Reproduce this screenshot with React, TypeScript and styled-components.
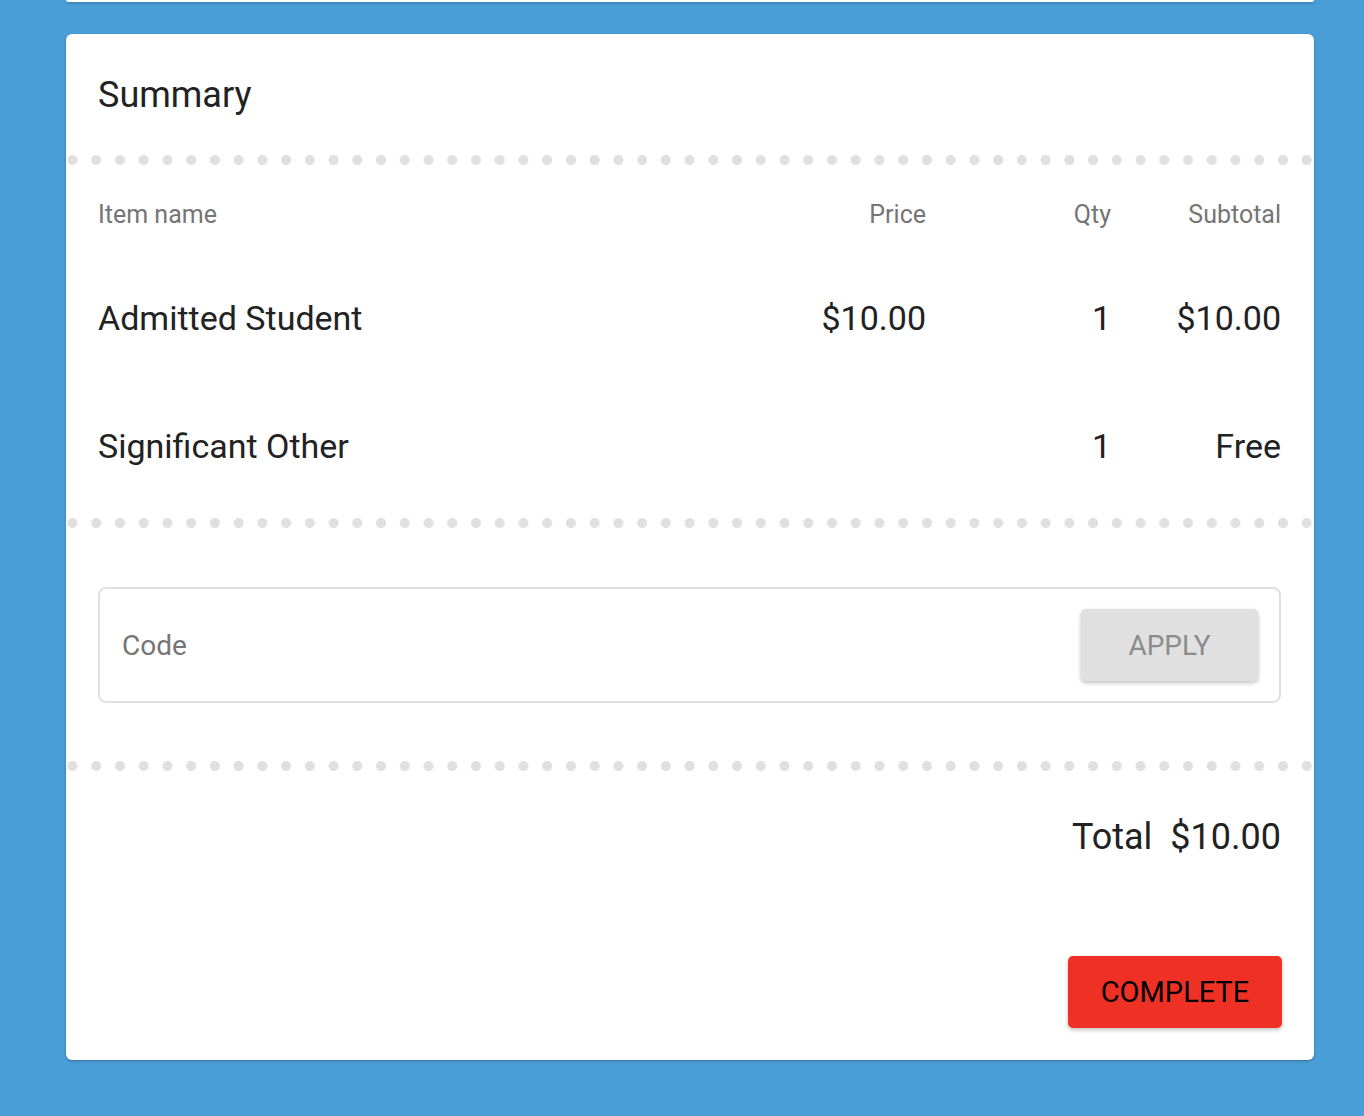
import React from 'react';
import styled, { createGlobalStyle } from 'styled-components';

const GlobalStyle = createGlobalStyle`
  body {
    margin: 0;
    background: #4a9ed8;
    font-family: Roboto, "Liberation Sans", sans-serif;
    color: #222;
  }
`;

const Page = styled.div`
  width: 1248px;
  margin-left: 66px;
  padding-bottom: 56px;
`;

const PrevCard = styled.div`
  height: 2px;
  background: #fff;
  border-radius: 0 0 6px 6px;
  box-shadow: 0 1px 3px rgba(0, 0, 0, 0.3);
  margin-bottom: 32px;
`;

const Card = styled.div`
  background: #fff;
  border-radius: 6px;
  box-shadow: 0 1px 3px rgba(0, 0, 0, 0.3);
  padding-bottom: 32px;
`;

const Title = styled.h2`
  margin: 0;
  padding: 40px 32px 39px;
  font-size: 36px;
  line-height: 42px;
  font-weight: 400;
`;

const Dots = styled.div`
  height: 10px;
  background-image: radial-gradient(circle, #e0e0e0 4.6px, transparent 5.4px);
  background-size: 23.735px 10px;
  background-position: -5.4px 0;
  background-repeat: repeat-x;
`;

const Items = styled.div`
  padding: 0 33px 8px 32px;
`;

const Row = styled.div<{ $head?: boolean }>`
  display: grid;
  grid-template-columns: 1fr 160px 185px 170px;
  align-items: ${(p) => (p.$head ? 'start' : 'center')};
  height: ${(p) => (p.$head ? '89px' : '128px')};
  box-sizing: border-box;
  padding-top: ${(p) => (p.$head ? '37px' : '0')};
  font-size: ${(p) => (p.$head ? '25px' : '34px')};
  line-height: ${(p) => (p.$head ? '26px' : '40px')};
  color: ${(p) => (p.$head ? '#757575' : '#222')};
`;

const Cell = styled.div<{ $right?: boolean }>`
  text-align: ${(p) => (p.$right ? 'right' : 'left')};
`;

const CodeSection = styled.div`
  padding: 59px 33px 58px 32px;
`;

const CodeBox = styled.div`
  display: flex;
  align-items: center;
  height: 116px;
  box-sizing: border-box;
  border: 2px solid #e0e0e0;
  border-radius: 8px;
  padding: 0 21px 0 22px;
`;

const CodeInput = styled.input`
  flex: 1;
  border: none;
  outline: none;
  font-family: inherit;
  font-size: 28px;
  color: #222;
  background: transparent;
  padding: 0;

  &::placeholder {
    color: #757575;
  }
`;

const Button = styled.button<{ $primary?: boolean }>`
  height: 72px;
  width: ${(p) => (p.$primary ? '214px' : '177px')};
  border: none;
  border-radius: 5px;
  font-family: inherit;
  font-size: ${(p) => (p.$primary ? '29px' : '28px')};
  font-weight: 400;
  background: ${(p) => (p.$primary ? '#ee3124' : '#e0e0e0')};
  color: ${(p) => (p.$primary ? '#000' : '#8c8c8c')};
  box-shadow: 0 2px 4px rgba(0, 0, 0, 0.25);
  cursor: pointer;
`;

const TotalRow = styled.div`
  display: flex;
  justify-content: flex-end;
  gap: 18px;
  padding: 45px 33px 0 32px;
  font-size: 36px;
  line-height: 42px;
`;

const Actions = styled.div`
  display: flex;
  justify-content: flex-end;
  padding: 98px 32px 0 32px;
`;

const items = [
  { name: 'Admitted Student', price: '$10.00', qty: '1', subtotal: '$10.00' },
  { name: 'Significant Other', price: '', qty: '1', subtotal: 'Free' },
];

export default function App() {
  return (
    <>
      <GlobalStyle />
      <Page>
        <PrevCard />
        <Card>
          <Title>Summary</Title>
          <Dots />
          <Items>
            <Row $head>
              <Cell>Item name</Cell>
              <Cell $right>Price</Cell>
              <Cell $right>Qty</Cell>
              <Cell $right>Subtotal</Cell>
            </Row>
            {items.map((it) => (
              <Row key={it.name}>
                <Cell>{it.name}</Cell>
                <Cell $right>{it.price}</Cell>
                <Cell $right>{it.qty}</Cell>
                <Cell $right>{it.subtotal}</Cell>
              </Row>
            ))}
          </Items>
          <Dots />
          <CodeSection>
            <CodeBox>
              <CodeInput placeholder="Code" />
              <Button>APPLY</Button>
            </CodeBox>
          </CodeSection>
          <Dots />
          <TotalRow>
            <span>Total</span>
            <span>$10.00</span>
          </TotalRow>
          <Actions>
            <Button $primary>COMPLETE</Button>
          </Actions>
        </Card>
      </Page>
    </>
  );
}
